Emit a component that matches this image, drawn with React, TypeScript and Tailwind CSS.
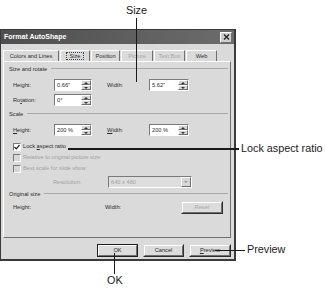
import React from "react";

const raised =
  "border border-t-white border-l-white border-r-[#6f6f6f] border-b-[#6f6f6f]";
const sunken =
  "border border-t-[#7a7a7a] border-l-[#7a7a7a] border-r-white border-b-white";

function Spin() {
  return (
    <div className="flex flex-col w-[10px] h-full">
      <div className={`flex-1 bg-[#d6d6d6] ${raised} flex items-center justify-center`}>
        <div className="w-0 h-0 border-l-[2px] border-r-[2px] border-b-[2px] border-l-transparent border-r-transparent border-b-[#333]" />
      </div>
      <div className={`flex-1 bg-[#d6d6d6] ${raised} flex items-center justify-center`}>
        <div className="w-0 h-0 border-l-[2px] border-r-[2px] border-t-[2px] border-l-transparent border-r-transparent border-t-[#333]" />
      </div>
    </div>
  );
}

function Field({ value, w }: { value: string; w: string }) {
  return (
    <div className={`${w} h-[12px] flex bg-white ${sunken}`}>
      <span className="flex-1 pl-[2px] leading-[10px]">{value}</span>
      <Spin />
    </div>
  );
}

function Header({ label }: { label: string }) {
  return (
    <div className="h-[10px] flex items-center pl-[5px] pr-[2px]">
      <span>{label}</span>
      <div className="flex-1 ml-[4px] h-[2px] border-t border-[#a8a8a8] border-b-white" />
    </div>
  );
}

function Check({ label, checked, disabled }: { label: React.ReactNode; checked?: boolean; disabled?: boolean }) {
  return (
    <div className="h-[9px] flex items-center pl-[9px]">
      <div className={`w-[8px] h-[8px] ${sunken} ${disabled ? "bg-[#d8d8d8]" : "bg-white"} flex items-center justify-center`}>
        {checked && (
          <svg width="6" height="6" viewBox="0 0 6 6">
            <path d="M0.5 3 L2.3 4.8 L5.5 1" stroke="#222" strokeWidth="1.2" fill="none" />
          </svg>
        )}
      </div>
      <span className={`ml-[2px] ${disabled ? "text-[#a2a2a2]" : ""}`}>{label}</span>
    </div>
  );
}

function Btn({ children, w, def, disabled }: { children: React.ReactNode; w: string; def?: boolean; disabled?: boolean }) {
  return (
    <div className={`${w} h-[13px] ${def ? "border border-[#1e1e1e]" : "border border-transparent border-r-[#2e2e2e] border-b-[#2e2e2e]"}`}>
      <div className={`w-full h-full ${raised} bg-[#dcdcdc] flex items-center justify-center ${disabled ? "text-[#a8a8a8]" : ""}`}>
        {children}
      </div>
    </div>
  );
}

const tabs = [
  { t: "Colors and Lines", w: "w-[56px]" },
  { t: "Size", w: "w-[30px]", sel: true },
  { t: "Position", w: "w-[29px]" },
  { t: "Picture", w: "w-[32px]", dis: true },
  { t: "Text Box", w: "w-[31px]", dis: true },
  { t: "Web", w: "w-[31px]" },
];

export default function App() {
  return (
    <div className="relative w-[325px] h-[288px] bg-white overflow-hidden font-['Liberation_Sans',Arial,sans-serif]">
      <div className="pt-[29px]">
        <div className="w-[236px] h-[232px] border border-[#3a3a3a] border-r-2 border-b-2 bg-[#dadada] flex flex-col text-[5.7px] text-[#2a2a2a]">
          {/* title bar */}
          <div className="h-[14px] bg-linear-to-r from-[#4e4e4e] to-[#6c6c6c] flex items-center pl-[3px] pr-[2px]">
            <span className="flex-1 text-white font-bold text-[7px]">Format AutoShape</span>
            <div className={`w-[12px] h-[11px] bg-[#cfcfcf] ${raised} flex items-center justify-center`}>
              <svg width="7" height="6" viewBox="0 0 7 6">
                <path d="M1 0.5 L6 5.5 M6 0.5 L1 5.5" stroke="#222" strokeWidth="1.3" />
              </svg>
            </div>
          </div>

          {/* tabs */}
          <div className="mt-[6px] h-[11px] flex items-end gap-[1px] pl-[2px]">
            {tabs.map((t) => (
              <div
                key={t.t}
                className={`${t.w} h-[11px] border-t border-l border-r border-t-white border-l-white border-r-[#6f6f6f] rounded-t-[1px] flex items-center justify-center ${t.dis ? "text-[#a4a4a4]" : ""}`}
              >
                {t.sel ? (
                  <span className="px-[2px] border border-dotted border-[#444] leading-[6px]">{t.t}</span>
                ) : (
                  t.t
                )}
              </div>
            ))}
          </div>

          {/* panel */}
          <div className="ml-[2px] w-[228px] h-[177px] border border-t-white border-l-white border-r-[#6f6f6f] border-b-[#6f6f6f] flex flex-col pt-[2px]">
            <Header label="Size and rotate" />
            <div className="mt-[5px] h-[12px] flex items-center pl-[9px]">
              <span className="w-[41px]">Height:</span>
              <Field value={'0.66"'} w="w-[38px]" />
              <span className="ml-[15px] w-[42px]">Width:</span>
              <Field value={'5.62"'} w="w-[40px]" />
            </div>
            <div className="mt-[3px] h-[12px] flex items-center pl-[9px]">
              <span className="w-[41px]">
                Ro<span className="underline">t</span>ation:
              </span>
              <Field value="0°" w="w-[38px]" />
            </div>
            <div className="mt-[3px]">
              <Header label="Scale" />
            </div>
            <div className="mt-[5px] h-[12px] flex items-center pl-[9px]">
              <span className="w-[41px]">
                <span className="underline">H</span>eight:
              </span>
              <Field value="200 %" w="w-[38px]" />
              <span className="ml-[15px] w-[42px]">
                <span className="underline">W</span>idth:
              </span>
              <Field value="200 %" w="w-[40px]" />
            </div>
            <div className="mt-[6px] flex flex-col gap-[2px]">
              <Check
                checked
                label={
                  <>
                    Lock <span className="underline">a</span>spect ratio
                  </>
                }
              />
              <Check disabled label="Relative to original picture size" />
              <Check disabled label="Best scale for slide show" />
            </div>
            <div className="mt-[3px] h-[12px] flex items-center pl-[49px]">
              <span className="w-[55px] text-[#a2a2a2]">Resolution:</span>
              <div className={`w-[84px] h-[12px] flex bg-[#dedede] ${sunken}`}>
                <span className="flex-1 pl-[2px] leading-[10px] text-[#a2a2a2]">640 x 480</span>
                <div className={`w-[10px] h-full bg-[#d6d6d6] ${raised} flex items-center justify-center`}>
                  <div className="w-0 h-0 border-l-[2px] border-r-[2px] border-t-[2px] border-l-transparent border-r-transparent border-t-[#9a9a9a]" />
                </div>
              </div>
            </div>
            <div className="mt-[1px]">
              <Header label="Original size" />
            </div>
            <div className="mt-[2px] h-[12px] flex items-center pl-[9px]">
              <span className="w-[92px]">Height:</span>
              <span className="w-[76px]">Width:</span>
              <Btn w="w-[42px]" disabled>
                Reset
              </Btn>
            </div>
          </div>

          {/* buttons */}
          <div className="mt-[6px] flex gap-[5px] pl-[96px]">
            <Btn w="w-[41px]" def>
              OK
            </Btn>
            <Btn w="w-[41px]">Cancel</Btn>
            <Btn w="w-[42px]">
              <span className="underline">P</span>review
            </Btn>
          </div>
        </div>
      </div>

      {/* callouts */}
      <span className="absolute left-[126px] top-[4px] text-[10.8px] leading-[13px] text-[#1a1a1a]">Size</span>
      <div className="absolute left-[136px] top-[18px] w-px h-[64px] bg-[#1a1a1a]" />

      <div className="absolute left-[68px] top-[148px] w-[171px] h-[1.5px] bg-[#1a1a1a]" />
      <span className="absolute left-[241px] top-[142px] text-[10.8px] leading-[13px] text-[#1a1a1a]">Lock aspect ratio</span>

      <div className="absolute left-[215px] top-[250px] w-[30px] h-px bg-[#1a1a1a]" />
      <span className="absolute left-[247px] top-[243px] text-[10.8px] leading-[13px] text-[#1a1a1a]">Preview</span>

      <div className="absolute left-[114px] top-[253px] w-px h-[21px] bg-[#1a1a1a]" />
      <span className="absolute left-[107px] top-[274px] text-[10.8px] leading-[13px] text-[#1a1a1a]">OK</span>
    </div>
  );
}
